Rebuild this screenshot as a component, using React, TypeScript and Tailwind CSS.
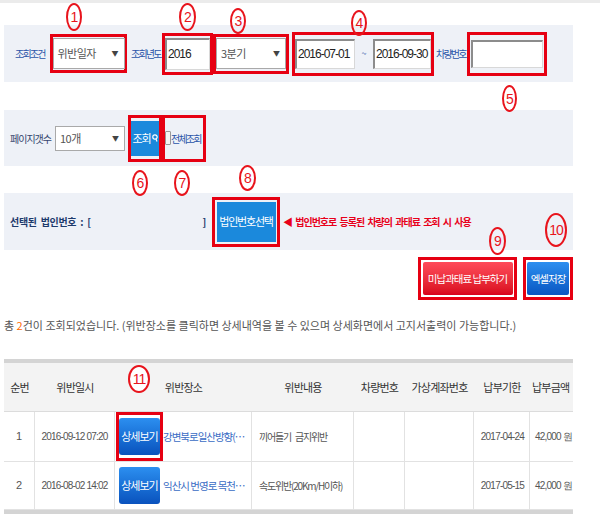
import React from 'react';

const SANS = "font-['Noto_Sans_CJK_KR',sans-serif]";
const NUM = "font-['Liberation_Sans_Narrow','Liberation_Sans',sans-serif]";

const MARKS = [
  { n: '1', cls: 'left-[66px] top-[3px] w-[16px] h-[28px]' },
  { n: '2', cls: 'left-[179px] top-[3px] w-[17px] h-[28px]' },
  { n: '3', cls: 'left-[230px] top-[8px] w-[16px] h-[26px]' },
  { n: '4', cls: 'left-[351px] top-[10px] w-[16px] h-[26px]' },
  { n: '5', cls: 'left-[502px] top-[85px] w-[15px] h-[27px]' },
  { n: '6', cls: 'left-[132px] top-[170px] w-[16px] h-[26px]' },
  { n: '7', cls: 'left-[174px] top-[170px] w-[16px] h-[26px]' },
  { n: '8', cls: 'left-[239px] top-[165px] w-[17px] h-[26px]' },
  { n: '9', cls: 'left-[489px] top-[227px] w-[17px] h-[28px]' },
  { n: '10', cls: 'left-[545px] top-[213px] w-[22px] h-[34px]' },
  { n: '11', cls: 'left-[128px] top-[365px] w-[22px] h-[28px] bg-white' },
];

function RedBox({ className, children }: { className: string; children: React.ReactNode }) {
  return (
    <div className={`border-[3px] border-[#e60012] flex items-center justify-center shrink-0 ${className}`}>
      {children}
    </div>
  );
}

function Select({ value, className }: { value: string; className: string }) {
  return (
    <div className={`bg-white border border-[#a9a9a9] flex items-center justify-between pl-[4px] pr-[5px] shrink-0 ${className}`}>
      <span className="text-[11px] tracking-[-0.5px] text-[#555] whitespace-nowrap">{value}</span>
      <span className="text-[7px] text-[#444]">▼</span>
    </div>
  );
}

function Input({ value, className }: { value?: string; className: string }) {
  return (
    <div className={`bg-white border-t-2 border-l-2 border-[#8c8c8c] border-r border-b border-r-[#d8d8d8] border-b-[#d8d8d8] flex items-center pl-[1px] shrink-0 ${NUM} text-[12px] tracking-[-1px] text-[#222] ${className}`}>
      {value}
    </div>
  );
}

function Label({ className, children }: { className: string; children: React.ReactNode }) {
  return (
    <span className={`shrink-0 whitespace-nowrap text-[10px] tracking-[-1.8px] text-[#2a54a8] ${className}`}>
      {children}
    </span>
  );
}

const ROWS = [
  { no: '1', date: '2016-09-12 07:20', place: '강변북로일산방향(…', desc: '끼어들기 금지위반', due: '2017-04-24', amt: '42,000 원', marked: true },
  { no: '2', date: '2016-08-02 14:02', place: '익산시 번영로 목천…', desc: '속도위반(20Km/H이하)', due: '2017-05-15', amt: '42,000 원', marked: false },
];

const COLS = 'grid grid-cols-[31px_80px_137px_102px_51px_69px_56px_43px]';

export default function App() {
  return (
    <div className={`relative w-[600px] h-[518px] overflow-hidden bg-white ${SANS}`}>
      <div className="h-[3px] bg-[#ebebeb]" />

      {/* 조회조건 row */}
      <div className="mt-[22px] ml-[4px] w-[569px] h-[57px] bg-[#eef1f7] flex items-center pl-[11px]">
        <Label className="w-[35px]">조회조건</Label>
        <RedBox className="w-[77px] h-[39px]">
          <Select value="위반일자" className="w-[72px] h-[31px]" />
        </RedBox>
        <Label className="w-[35px] pl-[4px]">조회년도</Label>
        <RedBox className="w-[51px] h-[42px]">
          <Input value="2016" className="w-[45px] h-[32px]" />
        </RedBox>
        <RedBox className="w-[76px] h-[40px]">
          <Select value="3분기" className="w-[70px] h-[31px]" />
        </RedBox>
        <RedBox className="ml-[3px] w-[142px] h-[44px] justify-start">
          <Input value="2016-07-01" className="w-[60px] h-[30px]" />
          <span className="w-[18px] text-center text-[9px] text-[#2a54a8]">~</span>
          <Input value="2016-09-30" className="w-[58px] h-[30px]" />
        </RedBox>
        <Label className="w-[33px] pl-[2px]">차량번호</Label>
        <RedBox className="w-[80px] h-[44px]">
          <Input className="w-[72px] h-[28px]" />
        </RedBox>
      </div>

      {/* 페이지갯수 row */}
      <div className="mt-[28px] ml-[4px] w-[569px] h-[56px] bg-[#eef1f7] flex items-center pl-[6px]">
        <span className="w-[45px] shrink-0 whitespace-nowrap text-[10px] tracking-[-1px] text-[#34456e]">페이지갯수</span>
        <Select value="10개" className="w-[70px] h-[25px]" />
        <RedBox className="ml-[3px] w-[34px] h-[47px]">
          <div className="w-[28px] h-[35px] bg-[#1b89dc] flex items-center justify-center gap-[1px] text-white text-[11px] tracking-[-1px] whitespace-nowrap">
            조회
            <svg width="6" height="8" viewBox="0 0 6 8" className="shrink-0">
              <circle cx="3" cy="3" r="2.2" fill="none" stroke="white" strokeWidth="1.2" />
              <line x1="4" y1="5" x2="5" y2="7.5" stroke="white" strokeWidth="1.2" />
            </svg>
          </div>
        </RedBox>
        <RedBox className="w-[44px] h-[47px] justify-start">
          <span className="w-[6px] h-[14px] shrink-0 border border-[#999] bg-[#f4f4f4] rounded-[1px]" />
          <Label className="">전체조회</Label>
        </RedBox>
      </div>

      {/* 법인번호 row */}
      <div className="mt-[27px] ml-[4px] w-[569px] h-[57px] bg-[#eef1f7] flex items-center pl-[6px]">
        <div className="w-[196px] shrink-0 flex justify-between text-[10px] font-bold tracking-[-0.3px] [word-spacing:2px] text-[#1d3a6c] whitespace-nowrap">
          <span>선택된 법인번호 : [</span>
          <span>]</span>
        </div>
        <RedBox className="ml-[6px] w-[68px] h-[50px]">
          <div className="w-[59px] h-[40px] bg-[#1b89dc] flex items-center justify-center text-white text-[11px] tracking-[-1.2px] whitespace-nowrap">
            법인번호선택
          </div>
        </RedBox>
        <span className="ml-[3px] whitespace-nowrap text-[10px] font-bold tracking-[-1px] [word-spacing:2px] text-[#e8001b]">
          ◀ 법인번호로 등록된 차량의 과태료 조회 시 사용
        </span>
      </div>

      {/* action buttons */}
      <div className="mt-[7px] h-[43px] flex justify-end gap-[6px] pr-[27px]">
        <RedBox className="w-[99px] h-[43px]">
          <div className="w-[90px] h-[33px] rounded-[2px] bg-gradient-to-b from-[#ff4a5a] to-[#d9001b] flex items-center justify-center text-white text-[10.5px] tracking-[-1px] whitespace-nowrap">
            미납과태료 납부하기
          </div>
        </RedBox>
        <RedBox className="w-[50px] h-[43px]">
          <div className="w-[42px] h-[33px] rounded-[2px] bg-gradient-to-b from-[#2c8ff0] to-[#0a56c2] flex items-center justify-center text-white text-[10.5px] tracking-[-1px] whitespace-nowrap">
            엑셀저장
          </div>
        </RedBox>
      </div>

      {/* count text */}
      <p className="mt-[18px] ml-[4px] h-[14px] leading-[14px] text-[11px] text-[#555] whitespace-nowrap">
        총 <span className="text-[#ff6a00]">2</span>건이 조회되었습니다. (위반장소를 클릭하면 상세내역을 볼 수 있으며 상세화면에서 고지서출력이 가능합니다.)
      </p>

      {/* table */}
      <div className="mt-[27px] ml-[4px] w-[569px] overflow-hidden">
        <div className={`${COLS} h-[53px] border-t-[4px] border-[#d4d4d4] border-b border-b-[#dcdcdc] bg-[#f3f3f3] items-center text-[11px] tracking-[-0.8px] text-[#333] whitespace-nowrap`}>
          <span className="text-center">순번</span>
          <span className="text-center">위반일시</span>
          <span className="text-center">위반장소</span>
          <span className="text-center">위반내용</span>
          <span className="text-center">차량번호</span>
          <span className="text-center">가상계좌번호</span>
          <span className="text-center">납부기한</span>
          <span className="pl-[2px]">납부금액</span>
        </div>
        {ROWS.map((r, i) => (
          <div
            key={r.no}
            className={`${COLS} ${i === 0 ? 'h-[50px]' : 'h-[48px]'} border-b border-[#e2e2e2] text-[#555] whitespace-nowrap`}
          >
            <div className={`flex items-center justify-center border-r border-[#e2e2e2] ${NUM} text-[11px]`}>{r.no}</div>
            <div className={`flex items-center justify-center border-r border-[#e2e2e2] ${NUM} text-[10px] tracking-[-0.8px]`}>{r.date}</div>
            <div className="flex items-center border-r border-[#e2e2e2] pl-[1px] overflow-hidden">
              <div className={`w-[47px] h-full flex items-center justify-center shrink-0 border-[3px] ${r.marked ? 'border-[#e60012]' : 'border-transparent'}`}>
                <div className="w-[42px] h-[37px] rounded-[3px] bg-gradient-to-b from-[#2c8ff0] to-[#0a52bd] flex items-center justify-center text-white text-[11px] tracking-[-1px]">
                  상세보기
                </div>
              </div>
              <span className="text-[10.5px] tracking-[-1px] text-[#3a6cc4]">{r.place}</span>
            </div>
            <div className="flex items-center border-r border-[#e2e2e2] pl-[7px] text-[10px] tracking-[-1.2px] [word-spacing:3px]">{r.desc}</div>
            <div className="border-r border-[#e2e2e2]" />
            <div className="border-r border-[#e2e2e2]" />
            <div className={`flex items-center justify-end pr-[5px] border-r border-[#e2e2e2] ${NUM} text-[10px] tracking-[-0.8px]`}>{r.due}</div>
            <div className={`flex items-center pl-[5px] ${NUM} text-[10px] tracking-[-0.8px]`}>{r.amt}</div>
          </div>
        ))}
        <div className="h-[4px] bg-[#d4d4d4]" />
      </div>

      {/* annotation marks */}
      {MARKS.map((m) => (
        <div
          key={m.n}
          className={`absolute ${m.cls} rounded-[50%] border-2 border-[#e8141c] flex items-center justify-center text-[#e8141c] font-['Liberation_Sans',sans-serif] text-[14px] tracking-[-1px] leading-none`}
        >
          {m.n}
        </div>
      ))}
    </div>
  );
}
